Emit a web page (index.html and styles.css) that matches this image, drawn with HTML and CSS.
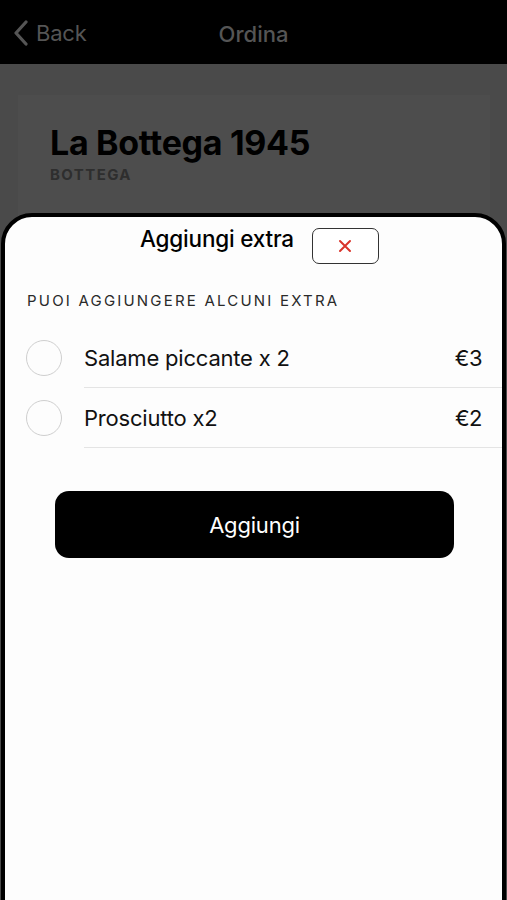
FILE: index.html
```html
<!DOCTYPE html>
<html lang="it">
<head>
<meta charset="utf-8">
<title>Ordina</title>
<link rel="stylesheet" href="styles.css">
</head>
<body>
<div class="screen">
  <header class="nav">
    <div class="nav-back">
      <svg class="chev" width="18" height="26" viewBox="0 0 18 26"><path d="M14 2 L4 13 L14 24" fill="none" stroke="#555" stroke-width="3.2" stroke-linecap="round" stroke-linejoin="round"/></svg>
      <span>Back</span>
    </div>
    <div class="nav-title">Ordina</div>
  </header>
  <main class="content">
    <section class="card">
      <h1 class="shop-name">La Bottega 1945</h1>
      <div class="shop-type">BOTTEGA</div>
    </section>
  </main>

  <div class="sheet">
    <div class="sheet-head">
      <h2 class="sheet-title">Aggiungi extra</h2>
      <button class="close-btn" aria-label="Chiudi">
        <svg width="14" height="14" viewBox="0 0 14 14"><path d="M2 2 L12 12 M12 2 L2 12" stroke="#d9342b" stroke-width="2" stroke-linecap="round"/></svg>
      </button>
    </div>
    <div class="section-label">PUOI AGGIUNGERE ALCUNI EXTRA</div>
    <ul class="extras">
      <li class="extra">
        <span class="radio"></span>
        <div class="extra-body"><span class="extra-name">Salame piccante x 2</span><span class="extra-price">€3</span></div>
      </li>
      <li class="extra">
        <span class="radio"></span>
        <div class="extra-body"><span class="extra-name">Prosciutto x2</span><span class="extra-price">€2</span></div>
      </li>
    </ul>
    <div class="actions">
      <button class="add-btn">Aggiungi</button>
    </div>
  </div>
</div>
</body>
</html>
```

FILE: styles.css
```css
* { box-sizing: border-box; }
html, body {
  margin: 0;
  padding: 0;
  background: #000;
}
body {
  font-family: Inter, "Noto Sans", "Liberation Sans", sans-serif;
  width: 507px;
  height: 900px;
  overflow: hidden;
}
.screen {
  position: relative;
  width: 507px;
  height: 900px;
  background: #4a4a4a;
  overflow: hidden;
}
.nav {
  height: 64px;
  background: #000;
  display: flex;
  align-items: center;
  justify-content: center;
  position: relative;
}
.nav-back {
  position: absolute;
  left: 12px;
  top: 20px;
  display: flex;
  align-items: center;
  gap: 6px;
  color: #555;
  font-size: 22px;
  letter-spacing: -0.2px;
}
.nav-title {
  color: #555;
  font-size: 22px;
  font-weight: 500;
  margin-top: 4px;
}
.content {
  padding: 31px 17px 0 18px;
}
.card {
  background: #4d4d4d;
  height: 200px;
  padding: 28px 32px;
}
.shop-name {
  margin: 0;
  font-size: 34px;
  font-weight: 700;
  color: #000;
  letter-spacing: -0.3px;
  line-height: 40px;
}
.shop-type {
  margin-top: 2px;
  font-size: 15px;
  font-weight: 700;
  letter-spacing: 1.4px;
  color: #2e2e2e;
}
.sheet {
  position: absolute;
  top: 213px;
  left: 1px;
  width: 505px;
  height: 720px;
  background: #fdfdfd;
  border: 4px solid #000;
  border-radius: 31px 31px 0 0;
}
.sheet-head {
  display: flex;
  justify-content: center;
  align-items: flex-start;
  gap: 18px;
  padding: 9px 0 0 12px;
}
.sheet-title {
  margin: 0;
  font-size: 22.5px;
  font-weight: 500;
  color: #000;
  line-height: 26px;
  letter-spacing: -0.2px;
}
.close-btn {
  width: 67px;
  height: 36px;
  border: 1.5px solid #333;
  border-radius: 7px;
  background: #fff;
  display: flex;
  align-items: center;
  justify-content: center;
  margin-top: 2px;
  padding: 0;
}
.section-label {
  margin: 27px 0 0 22px;
  font-size: 15px;
  letter-spacing: 2.2px;
  color: #2a2a2a;
  line-height: 20px;
}
.extras {
  list-style: none;
  margin: 17px 0 0 0;
  padding: 0;
}
.extra {
  display: flex;
  align-items: stretch;
  height: 60px;
  padding-left: 21px;
}
.radio {
  width: 36px;
  height: 36px;
  border: 1.5px solid #cfcfcf;
  border-radius: 50%;
  align-self: center;
  margin-top: -1px;
  flex: none;
}
.extra-body {
  flex: 1;
  display: flex;
  align-items: center;
  justify-content: space-between;
  margin-left: 22px;
  padding: 0 20px 0 0;
  border-bottom: 1px solid #e4e4e4;
  font-size: 22px;
  color: #111;
  letter-spacing: -0.2px;
}
.extra-price {
  letter-spacing: -0.5px;
}
.actions {
  padding: 43px 48px 0 50px;
}
.add-btn {
  width: 100%;
  height: 67px;
  border: none;
  border-radius: 14px;
  background: #000;
  color: #fff;
  font-family: inherit;
  font-size: 22px;
  letter-spacing: -0.2px;
}
```
